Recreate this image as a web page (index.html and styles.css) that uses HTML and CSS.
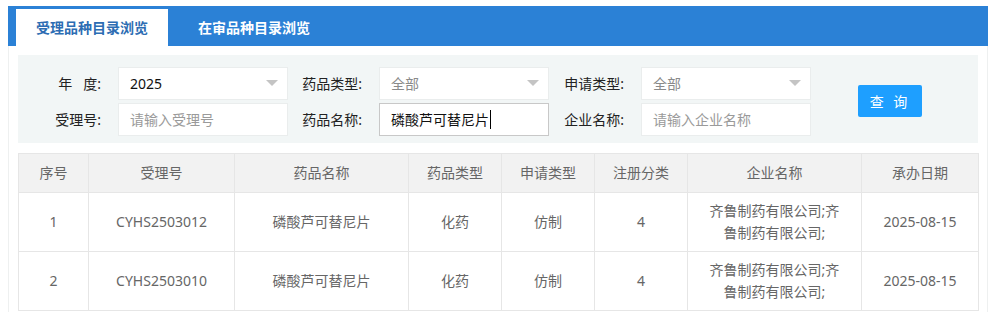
FILE: index.html
```html
<!DOCTYPE html>
<html lang="zh-CN">
<head>
    <meta charset="UTF-8">
    <title>品种目录浏览</title>
    <link rel="stylesheet" href="styles.css">
</head>
<body>
    <div class="page">
        <div class="tabs">
            <div class="tab active">受理品种目录浏览</div>
            <div class="tab">在审品种目录浏览</div>
        </div>

        <div class="panel">
            <form class="search">
                <div class="fields">
                    <label class="lbl">年&nbsp;&nbsp;&nbsp;度:</label>
                    <div class="select"><span class="val">2025</span><span class="arrow"></span></div>

                    <label class="lbl">药品类型:</label>
                    <div class="select"><span class="val muted">全部</span><span class="arrow"></span></div>

                    <label class="lbl">申请类型:</label>
                    <div class="select"><span class="val muted">全部</span><span class="arrow"></span></div>

                    <label class="lbl">受理号:</label>
                    <div class="input"><span class="placeholder">请输入受理号</span></div>

                    <label class="lbl">药品名称:</label>
                    <div class="input focus"><span class="val">磷酸芦可替尼片</span><span class="caret"></span></div>

                    <label class="lbl">企业名称:</label>
                    <div class="input"><span class="placeholder">请输入企业名称</span></div>
                </div>
                <button type="button" class="btn">查 询</button>
            </form>

            <table class="list">
                <colgroup>
                    <col style="width:70px">
                    <col style="width:146px">
                    <col style="width:174px">
                    <col style="width:93px">
                    <col style="width:93px">
                    <col style="width:93px">
                    <col style="width:174px">
                    <col style="width:117px">
                </colgroup>
                <thead>
                    <tr>
                        <th>序号</th>
                        <th>受理号</th>
                        <th>药品名称</th>
                        <th>药品类型</th>
                        <th>申请类型</th>
                        <th>注册分类</th>
                        <th>企业名称</th>
                        <th>承办日期</th>
                    </tr>
                </thead>
                <tbody>
                    <tr>
                        <td>1</td>
                        <td>CYHS2503012</td>
                        <td>磷酸芦可替尼片</td>
                        <td>化药</td>
                        <td>仿制</td>
                        <td>4</td>
                        <td>齐鲁制药有限公司;齐鲁制药有限公司;</td>
                        <td>2025-08-15</td>
                    </tr>
                    <tr>
                        <td>2</td>
                        <td>CYHS2503010</td>
                        <td>磷酸芦可替尼片</td>
                        <td>化药</td>
                        <td>仿制</td>
                        <td>4</td>
                        <td>齐鲁制药有限公司;齐鲁制药有限公司;</td>
                        <td>2025-08-15</td>
                    </tr>
                </tbody>
            </table>
        </div>
    </div>
</body>
</html>
```

FILE: styles.css
```css
body {
    margin: 0;
    font-family: "Noto Sans", "Noto Sans CJK SC", sans-serif;
    font-size: 14px;
    color: #333;
    background-color: #fff;
}
.page {
    width: 980px;
    padding: 6px 0 0 8px;
}
.tabs {
    display: flex;
    align-items: flex-end;
    height: 40px;
    padding-left: 8px;
    background-color: #2b81d6;
}
.tab {
    height: 37px;
    line-height: 37px;
    padding: 0 20px;
    margin-right: 10px;
    color: #fff;
    font-weight: bold;
}
.tab.active {
    background-color: #fff;
    color: #2c6db3;
}
.panel {
    padding: 9px 9px 0 9px;
    border: 1px solid #eef0f0;
    border-top: none;
    height: 300px;
}
.search {
    display: flex;
    align-items: center;
    height: 88px;
    padding: 4px 0 0 0;
    box-sizing: border-box;
    background-color: #f2f6f6;
}
.fields {
    display: grid;
    grid-template-columns: 100px 170px 91px 170px 92px 170px;
    row-gap: 3px;
}
.lbl {
    text-align: right;
    padding-right: 17px;
    line-height: 33px;
    color: #222;
    white-space: nowrap;
}
.select, .input {
    display: flex;
    align-items: center;
    justify-content: space-between;
    height: 33px;
    padding: 0 9px 0 11px;
    background-color: #fff;
    border: 1px solid #eaeded;
    box-sizing: border-box;
}
.input {
    justify-content: flex-start;
}
.input.focus {
    border-color: #c8c8c8;
}
.val {
    color: #111;
}
.muted {
    color: #8a8a8a;
}
.placeholder {
    color: #9a9a9a;
}
.arrow {
    width: 0;
    height: 0;
    border-left: 6px solid transparent;
    border-right: 6px solid transparent;
    border-top: 6px solid #c4c4c4;
}
.caret {
    display: inline-block;
    width: 1px;
    height: 19px;
    margin-left: 1px;
    background-color: #000;
}
.btn {
    width: 64px;
    height: 32px;
    margin-left: 47px;
    border: none;
    border-radius: 2px;
    background-color: #1e9fff;
    color: #fff;
    font-family: inherit;
    font-size: 14px;
    letter-spacing: 3px;
    cursor: pointer;
}
.list {
    width: 960px;
    margin-top: 10px;
    border-collapse: collapse;
    table-layout: fixed;
    color: #666;
}
.list th, .list td {
    border: 1px solid #e6e6e6;
    text-align: center;
    padding: 0 15px;
    font-weight: normal;
    line-height: 22px;
}
.list th {
    height: 38px;
    background-color: #f2f2f2;
}
.list td {
    height: 58px;
}
```
